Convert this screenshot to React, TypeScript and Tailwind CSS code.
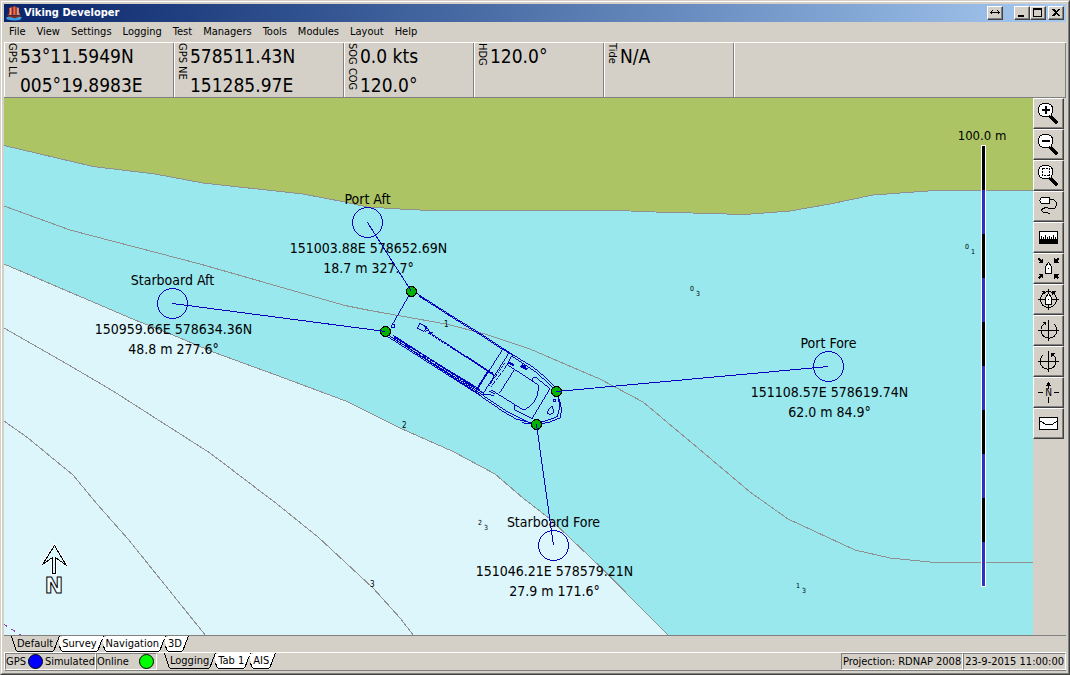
import type { ReactNode } from "react";

const menuItems = ["File", "View", "Settings", "Logging", "Test", "Managers", "Tools", "Modules", "Layout", "Help"];

const readouts = [
  { label: "GPS LL", lines: ["53°11.5949N", "005°19.8983E"], width: "w-[170px]" },
  { label: "GPS NE", lines: ["578511.43N", "151285.97E"], width: "w-[170px]" },
  { label: "SOG COG", lines: ["0.0 kts", "120.0°"], width: "w-[130px]" },
  { label: "HDG", lines: ["120.0°"], width: "w-[130px]" },
  { label: "Tide", lines: ["N/A"], width: "w-[130px]" },
];

const anchors = [
  { name: "Port Aft", x: 367.5, y: 222.5, dotX: 411.5, dotY: 291.5, position: "151003.88E 578652.69N", range: "18.7 m 327.7°" },
  { name: "Starboard Aft", x: 172.5, y: 303.5, dotX: 385.5, dotY: 331.5, position: "150959.66E 578634.36N", range: "48.8 m 277.6°" },
  { name: "Port Fore", x: 828.5, y: 366.5, dotX: 556.5, dotY: 391.5, position: "151108.57E 578619.74N", range: "62.0 m 84.9°" },
  { name: "Starboard Fore", x: 553.5, y: 545.5, dotX: 536.5, dotY: 424.5, position: "151046.21E 578579.21N", range: "27.9 m 171.6°" },
];

const soundings = [
  { x: 690, y: 291, whole: "0", tenth: "3" },
  { x: 965, y: 249, whole: "0", tenth: "1" },
  { x: 796, y: 588, whole: "1", tenth: "3" },
  { x: 478, y: 525, whole: "2", tenth: "3" },
];

const contourLabels = [
  { x: 444, y: 327, text: "1" },
  { x: 402, y: 428, text: "2" },
  { x: 370, y: 587, text: "3" },
];

const SHORE =
  "4,145.5 93,166.5 155,174 203,183 303,194 345,202 367,207 400,209 430,210.5 618,210.5 655,212 692,213 745,214.5 790,211 830,204 873,195 935,190.5 1033,190.5";
const DEPTH_2 =
  "4,264 100,305 135,320 173,335 213,352 280,376.5 347,401.5 400,428 453,451.5 495,474 523,498 550,519 600,566.5 669,636";

const contours = [
  SHORE,
  "4,206 70,230 200,264 345,305.5 370,310.5 446,324 485,334 530,349 580,370.5 600,379 643,402 692,443 750,492 788,519 855,550 890,558 935,562.5 1033,562.5",
  DEPTH_2,
  "4,328 67,364 113,391 163,423 210,453 277,504 318,537 373,588 400,618 414,636",
  "4,421 28,438 73,475 97,504 128,539 206,636",
];

function WindowButton({ label, children }: { label: string; children: ReactNode }) {
  return (
    <button
      type="button"
      aria-label={label}
      className="h-[14px] w-4 border border-t-white border-r-[#404040] border-b-[#404040] border-l-white bg-[#d4d0c8] shadow-[inset_-1px_-1px_0_#808080]"
    >
      <svg viewBox="0 0 14 12" className="block h-3 w-[14px]" shapeRendering="crispEdges">
        {children}
      </svg>
    </button>
  );
}

function TitleBar() {
  return (
    <header className="flex h-[18px] shrink-0 items-center bg-linear-to-r from-[#0a246a] to-[#a6caf0] pr-[2px] pl-[2px]">
      <svg viewBox="0 0 16 16" className="size-4">
        <path d="M3 3 L6 2 L6 10 L2.5 10 Q4 6 3 3Z" fill="#e0593a" />
        <path d="M6.5 1.5 L10 1.5 L10 10 L6.5 10Z" fill="#c8371f" />
        <path d="M10.5 2 L13 3 Q12.5 7 14 10 L10.5 10Z" fill="#e87a50" />
        <path d="M4.5 3V10M8.2 1.5V10M11.8 3V10" stroke="#f4b184" strokeWidth=".7" />
        <path d="M1 9 Q2 10.5 4 10.5 H13 Q14.5 10.5 15 9 Q15 13 12 13.5 H5 Q1.500 13 1 9Z" fill="#7a2d1c" />
        <path d="M0 12.500 Q3 11 6 12.500 T11 12.500 T16 12.500 L14 15 Q8 16 1 14.500Z" fill="#3f9be0" />
      </svg>
      <h1 className="ml-[2px] text-[11px] leading-[18px] font-bold text-white">Viking Developer</h1>
      <div className="ml-auto flex">
        <div className="mr-[11px] flex">
          <WindowButton label="Resize">
            <path d="M2.500 5.500H11.500M4.500 3.500L2.500 5.500L4.500 7.500M9.500 3.500L11.500 5.500L9.500 7.500" fill="none" stroke="#000" />
          </WindowButton>
        </div>
        <WindowButton label="Minimize">
          <path d="M3 8H9V10H3Z" />
        </WindowButton>
        <WindowButton label="Maximize">
          <path d="M2 1H11V10H2ZM3 3V9H10V3Z" fillRule="evenodd" />
        </WindowButton>
        <div className="ml-[2px] flex">
          <WindowButton label="Close">
            <path d="M3 2H5L7 4L9 2H11L8 5.500L11 9H9L7 7L5 9H3L6 5.500Z" />
          </WindowButton>
        </div>
      </div>
    </header>
  );
}

function Readouts() {
  return (
    <section className="flex h-14 shrink-0 border-t border-b border-t-white border-b-[#808080]">
      {readouts.map((item) => (
        <div
          key={item.label}
          className={`flex shrink-0 border-r border-l border-r-[#808080] border-l-white pl-[1px] ${item.width}`}
        >
          <span className="mr-[2px] w-3 text-[11px] leading-3 whitespace-nowrap [writing-mode:vertical-rl]">
            {item.label}
          </span>
          <div className="-mt-px text-[19px] leading-[29px] whitespace-nowrap">
            {item.lines.map((line) => (
              <p key={line}>{line}</p>
            ))}
          </div>
        </div>
      ))}
      <div className="flex-1 border-r border-l border-r-[#808080] border-l-white" />
    </section>
  );
}

// Deck plan, drawn at three units per pixel
function Vessel() {
  return (
    <g transform="translate(370 270) scale(.33333)" fill="none" stroke="#0000c0" strokeWidth="3">
      <path d="M124 64L62 172M140 70L230 128L330 190L425 252L490 292L530 325L560 358" />
      <path d="M146 77L235 135L330 194L400 240M425 258L500 308L552 356M148 80L165 90M228 130L240 138" />
      <path d="M560 370L570 395L575 420L570 444L540 456L500 464L455 458M566 375L568 415L562 440L530 452L500 458" />
      <path d="M50 198L320 370L400 425L440 448L500 462M56 196L325 366L350 384L410 424L470 454M62 200L330 374" />
      <path d="M70 196L340 370M76 204L330 358" />
      <path d="M74 200L334 366" strokeDasharray="6 3" strokeWidth="5" />
      <path d="M72 207L84 203M110 225L120 230M160 257L168 262M260 318L268 325M290 336L300 346" strokeWidth="6" />
      <path d="M62 172L68 160M64 172H74V166M68 164H76" />
      <path d="M150 160L170 170L162 184L142 175ZM160 166L176 180L166 184M176 184L190 190" />
      <path d="M176 188L370 312" strokeWidth="5" strokeDasharray="9 2" />
      <path d="M176 186L372 316" />
      <path d="M398 238L316 368M416 250L336 376M424 258L412 284" />
      <path d="M354 304L318 362" strokeWidth="5" />
      <path d="M412 284L362 352M404 280L356 348" strokeDasharray="7 3" />
      <path d="M412 284L505 345Q507 380 485 404Q470 418 460 420L364 360" />
      <path d="M434 298L388 370M400 238L428 256M352 300L378 320M340 372L372 376M356 362L376 372" />
      <path d="M416 278L432 286M452 288L472 298M456 286L468 292" strokeWidth="6" />
      <path d="M488 334V324L500 324L540 356L486 446L434 420L433 408H440" />
      <path d="M548 408L550 428L542 433L530 430L538 416ZM550 388H557V396H550Z" />
    </g>
  );
}

function Chart() {
  return (
    <svg
      viewBox="4 98 1029 537"
      preserveAspectRatio="xMinYMin slice"
      className="min-w-0 flex-1 text-[14px]"
      role="img"
      aria-label="Chart"
    >
      <g shapeRendering="crispEdges">
        <rect x="4" y="98" width="1029" height="537" fill="#98e8ee" />
        <polygon points={`4,98 ${SHORE} 1033,98`} fill="#acc464" />
        <polygon points={`${DEPTH_2} 4,636`} fill="#dcf6fc" />
        {contours.map((points) => (
          <polyline key={points} points={points} fill="none" stroke="#909090" />
        ))}
        <path d="M4 624.500L22 635.500" stroke="#9040b0" strokeDasharray="4 5" />
      </g>

      <g fontSize="7">
        {soundings.map((s) => (
          <g key={`${s.x}-${s.y}`}>
            <text x={s.x} y={s.y}>
              {s.whole}
            </text>
            <text x={s.x + 6} y={s.y + 5}>
              {s.tenth}
            </text>
          </g>
        ))}
        {contourLabels.map((c) => (
          <text key={c.text} x={c.x} y={c.y} fontSize="8">
            {c.text}
          </text>
        ))}
      </g>

      <g textAnchor="middle">
        {anchors.map((a) => (
          <g key={a.name}>
            <text x={a.x} y={a.y - 19}>
              {a.name}
            </text>
            <text x={a.x + 1} y={a.y + 30}>
              {a.position}
            </text>
            <text x={a.x + 1} y={a.y + 50}>
              {a.range}
            </text>
          </g>
        ))}
      </g>

      <g shapeRendering="crispEdges">
        <Vessel />
        {anchors.map((a) => (
          <g key={a.name} stroke="#0000c0">
            <circle cx={a.dotX} cy={a.dotY} r="5" fill="#00b400" stroke="#000" />
            <circle cx={a.x} cy={a.y} r="15" fill="none" />
            <line x1={a.x} y1={a.y} x2={a.dotX} y2={a.dotY} />
          </g>
        ))}
      </g>

      {/* Scale bar */}
      <text x="982" y="140" fontSize="13" textAnchor="middle">
        100.0 m
      </text>
      <g shapeRendering="crispEdges">
        <rect x="981" y="145" width="5" height="442" fill="#fff" />
        {Array.from({ length: 10 }, (_, i) => (
          <rect key={i} x="982" y={146 + i * 44} width="3" height="44" fill={i % 2 ? "#3030c8" : "#000"} />
        ))}
      </g>

      {/* North arrow */}
      <g strokeLinejoin="miter">
        <path
          d="M54.500 545.500L42.500 564.500L52.500 557.500V573.500H55.500V557.500L66.500 565.500Z"
          fill="#fff"
          stroke="#fff"
          strokeWidth="3"
        />
        <path
          d="M54.500 545.500L42.500 564.500L52.500 557.500V573.500H55.500V557.500L66.500 565.500Z"
          fill="#dcf6fc"
          stroke="#000"
          shapeRendering="crispEdges"
        />
        <text
          x="54"
          y="593"
          fontSize="22"
          fontWeight="bold"
          textAnchor="middle"
          fill="#f4fcff"
          stroke="#000"
          className="font-['DejaVu_Sans',sans-serif]"
        >
          N
        </text>
      </g>
    </svg>
  );
}

function Lens({ children }: { children: ReactNode }) {
  return (
    <>
      <path d="M17.500 18.500L24.500 25.500" stroke="#000" strokeWidth="3.500" />
      <path
        d="M10.500 5.500H15.500L18.500 7.500L19.500 9.500V14.500L17.500 17.500L15.500 18.500H10.500L7.500 17.500L5.500 14.500V9.500L7.500 6.500Z"
        fill="#fff"
        stroke="#000"
      />
      {children}
    </>
  );
}

const boat = <path d="M15.500 9.500L18.500 13.500V20.500H12.500V13.500ZM15.500 15V16" fill="#fff" stroke="#000" />;

const tools: { label: string; icon: ReactNode }[] = [
  {
    label: "Zoom in",
    icon: (
      <Lens>
        <path d="M9 12H17M13 8V16" stroke="#000" strokeWidth="2" />
      </Lens>
    ),
  },
  {
    label: "Zoom out",
    icon: (
      <Lens>
        <path d="M9 12H17" stroke="#000" strokeWidth="2" />
      </Lens>
    ),
  },
  {
    label: "Zoom window",
    icon: (
      <Lens>
        <path d="M9.500 8.500H16.500V15.500H9.500Z" fill="none" stroke="#000" strokeDasharray="2 1" />
      </Lens>
    ),
  },
  {
    label: "Pan",
    icon: (
      <>
        <path
          d="M16.500 8.500H20.500L23.500 11.500V14.500L21.500 17.500H16.500L13.500 16.500L9.500 17.500L8.500 19.500L10.500 21.500L14.500 21.500L17.500 23.500"
          fill="none"
          stroke="#000"
        />
        <path d="M6.500 9.500L8.500 6.500H16.500V12.500H8.500Z" fill="#fff" stroke="#000" />
      </>
    ),
  },
  {
    label: "Measure",
    icon: (
      <>
        <path d="M6.500 9.500H24.500V21.500H6.500Z" fill="#fff" stroke="#000" />
        <path d="M7 17H24V21H7Z" />
        <path
          d="M8.500 14V17M10.500 15V17M12.500 13V17M14.500 15V17M16.500 14V17M18.500 15V17M20.500 13V17M22.500 15V17"
          stroke="#000"
        />
      </>
    ),
  },
  {
    label: "Center vessel",
    icon: (
      <>
        <path d="M10 5V10H5ZM21 5V10H26ZM10 26V21H5ZM21 26V21H26Z" />
        <path d="M5.500 5.500L9 9M25.500 5.500L22 9M5.500 25.500L9 22M25.500 25.500L22 22" stroke="#000" strokeWidth="1.500" />
        {boat}
      </>
    ),
  },
  {
    label: "Heading up",
    icon: (
      <>
        <circle cx="15.500" cy="15.500" r="8" fill="none" stroke="#000" />
        <path d="M15.500 5V26M5 15.500H26" stroke="#000" />
        <path d="M8 7H12V11ZM23 7H19V11Z" />
        {boat}
      </>
    ),
  },
  {
    label: "Rotate right",
    icon: (
      <>
        <path d="M11.500 8.500A8 8 0 1 0 21.500 9.500" fill="none" stroke="#000" />
        <path d="M15.500 5V26M5 15.500H26" stroke="#000" />
        <path d="M9 7H13V11Z" />
      </>
    ),
  },
  {
    label: "Rotate left",
    icon: (
      <>
        <path d="M19.500 8.500A8 8 0 1 1 9.500 9.500" fill="none" stroke="#000" />
        <path d="M15.500 5V26M5 15.500H26" stroke="#000" />
        <path d="M22 7H18V11Z" />
      </>
    ),
  },
  {
    label: "North up",
    icon: (
      <>
        <path d="M15.500 6V12M15.500 20V26M5 15.500H10M21 15.500H26" stroke="#000" />
        <path d="M15.500 5L18.500 9H12.500Z" />
        <text x="15.500" y="19" fontSize="10" textAnchor="middle">
          N
        </text>
      </>
    ),
  },
  {
    label: "Profile",
    icon: (
      <>
        <path d="M6.500 9.500H24.500V21.500H6.500Z" fill="#fff" stroke="#000" />
        <path d="M7 13.500H8.500L12.500 16.500H19.500L21.500 14.500L24 13.500" fill="none" stroke="#000" />
      </>
    ),
  },
];

function Toolbar() {
  return (
    <aside className="w-[33px] shrink-0">
      {tools.map((tool) => (
        <button
          key={tool.label}
          type="button"
          aria-label={tool.label}
          className="block size-[31px] border border-t-white border-r-[#404040] border-b-[#404040] border-l-white shadow-[inset_-1px_-1px_0_#808080]"
        >
          <svg viewBox="1 1 29 29" className="block size-[29px]" shapeRendering="crispEdges">
            {tool.icon}
          </svg>
        </button>
      ))}
    </aside>
  );
}

function Tabs({ items }: { items: string[] }) {
  return (
    <div role="tablist" className="flex">
      {items.map((item, i) => {
        const fill = i === 0 ? "#d4d0c8" : "#fff";
        return (
          <button
            key={item}
            type="button"
            role="tab"
            aria-selected={i === 0}
            className={`flex h-4 text-[11px] leading-4 whitespace-nowrap ${i === 0 ? "relative" : "-ml-1"}`}
          >
            <svg viewBox="0 0 6 16" className="h-4 w-[6px]" shapeRendering="crispEdges">
              <path d={i === 0 ? "M0 0L5 16H6V0Z" : "M2 1L4 10L5 16H6V1Z"} fill={fill} />
              <path d={i === 0 ? "M.5 0L5.500 15.500" : "M3.500 10L5.500 15.500"} stroke="#000" />
            </svg>
            <span className={`h-4 border-b border-black ${i === 0 ? "" : "bg-white"}`}>{item}</span>
            <svg viewBox="0 0 7 16" className="h-4 w-[7px]" shapeRendering="crispEdges">
              <path d="M0 0H6L1 16H0Z" fill={fill} />
              <path d="M6.500 0L.5 15.500" stroke="#000" />
            </svg>
          </button>
        );
      })}
    </div>
  );
}

function StatusCell({ children }: { children: ReactNode }) {
  return (
    <div className="flex h-[17px] items-center border border-t-[#808080] border-r-white border-b-white border-l-[#808080] text-[11px] leading-[15px] whitespace-nowrap">
      {children}
    </div>
  );
}

function StatusBar() {
  return (
    <footer className="flex h-[19px] shrink-0 border-t border-b border-l border-t-white border-b-[#808080] border-l-white">
      <StatusCell>
        <span>GPS</span>
        <span className="mx-[2px] size-[15px] rounded-full border border-black bg-[#0000ff]" />
        <span>Simulated</span>
      </StatusCell>
      <StatusCell>
        <span className="w-[42px]">Online</span>
        <span className="mr-[2px] size-[15px] rounded-full border border-black bg-[#00ff00]" />
      </StatusCell>
      <div className="ml-[7px]">
        <Tabs items={["Logging", "Tab 1", "AIS"]} />
      </div>
      <div className="ml-auto flex">
        <StatusCell>
          <span className="px-px">Projection: RDNAP 2008</span>
        </StatusCell>
        <StatusCell>
          <span className="px-px">23-9-2015 11:00:00</span>
        </StatusCell>
      </div>
    </footer>
  );
}

export default function App() {
  return (
    <div className="flex h-screen flex-col overflow-hidden border border-t-[#d4d0c8] border-r-[#404040] border-b-[#404040] border-l-[#d4d0c8] bg-[#d4d0c8] font-['DejaVu_Sans_Condensed','DejaVu_Sans',sans-serif] text-black">
      <div className="flex min-h-0 flex-1 flex-col border border-t-white border-r-[#808080] border-b-[#808080] border-l-white p-[2px]">
        <TitleBar />
        <nav className="flex h-5 shrink-0 items-center gap-px text-[11px]">
          {menuItems.map((item) => (
            <button key={item} type="button" className="px-[5px]">
              {item}
            </button>
          ))}
        </nav>
        <Readouts />
        <main className="flex min-h-0 flex-1">
          <Chart />
          <Toolbar />
        </main>
        <div className="h-[17px] shrink-0 border-t border-[#808080] pl-[7px]">
          <Tabs items={["Default", "Survey", "Navigation", "3D"]} />
        </div>
        <StatusBar />
      </div>
    </div>
  );
}
